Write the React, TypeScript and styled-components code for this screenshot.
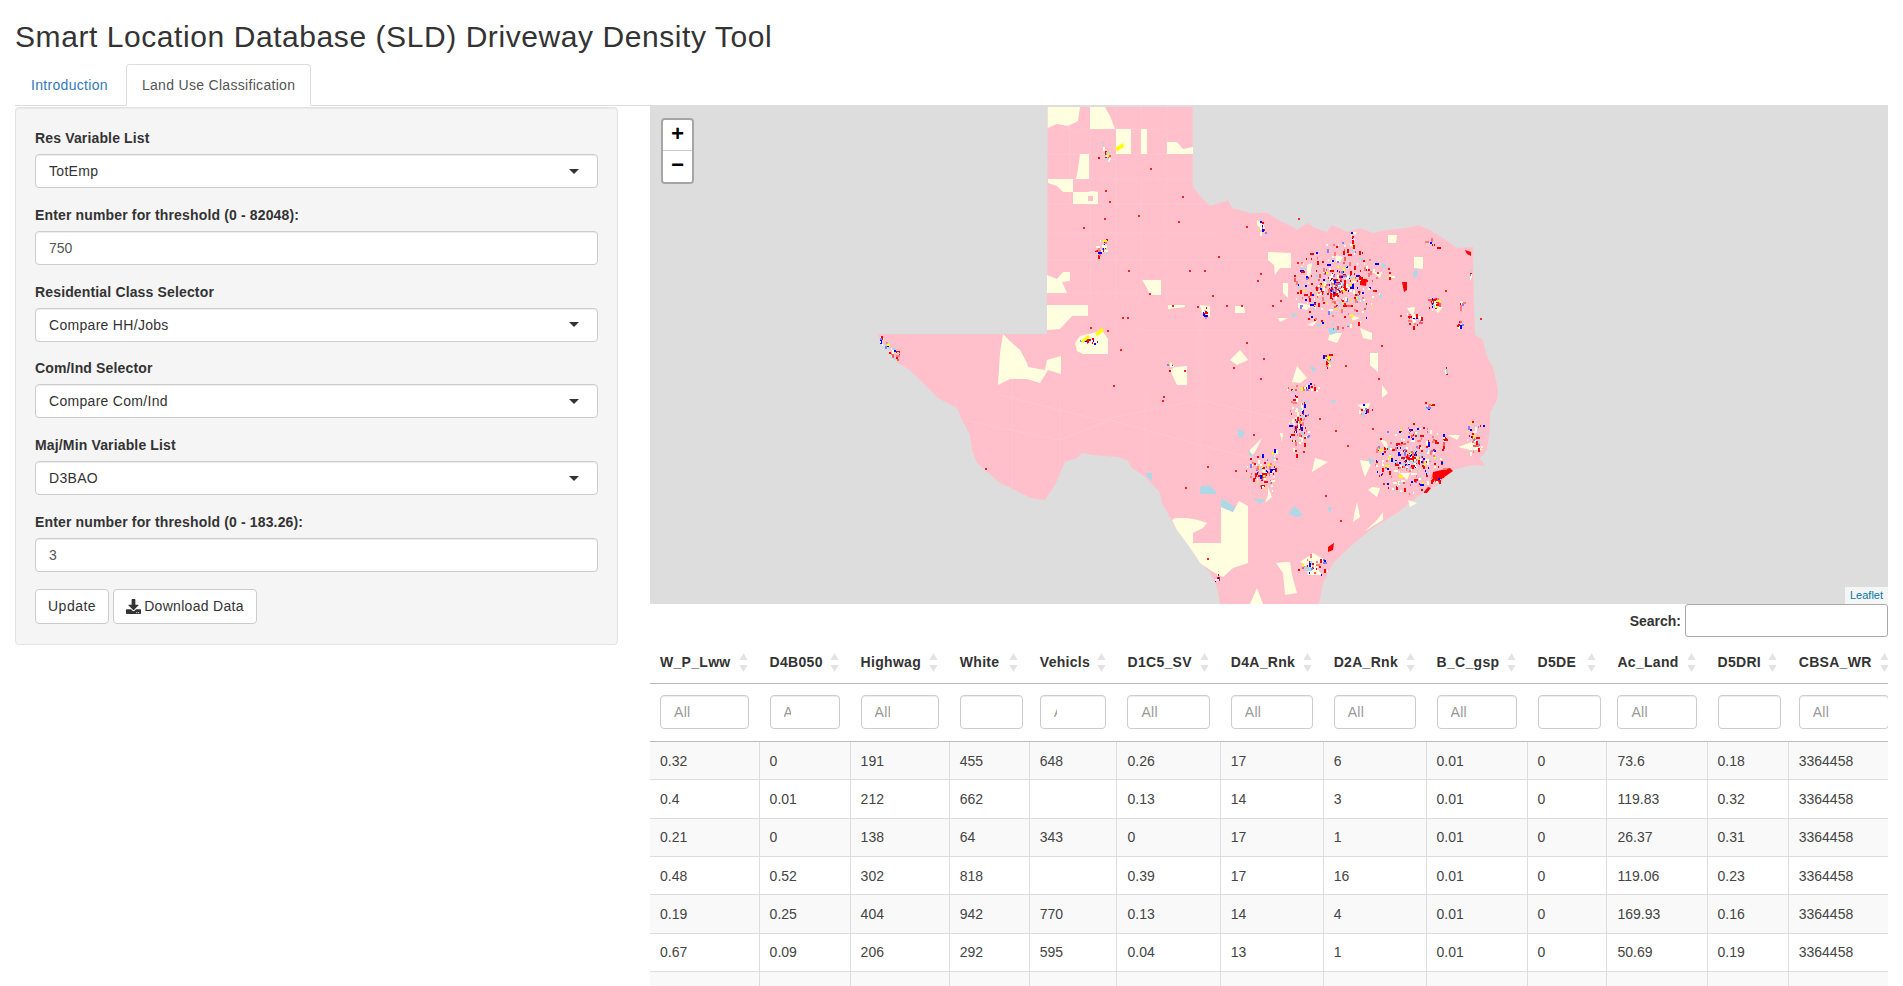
import styled, { createGlobalStyle } from "styled-components";
import { FaDownload } from "react-icons/fa";

const GlobalStyle = createGlobalStyle`
  html, body {
    margin: 0;
    height: 100%;
    overflow: hidden;
    background: #fff;
  }
  body {
    font-family: "Liberation Sans", Arial, sans-serif;
    font-size: 14px;
    line-height: 20px;
    color: #333;
  }
  * {
    box-sizing: border-box;
  }
`;

const Page = styled.div`
  padding: 0 15px;
`;

const Title = styled.h2`
  margin: 20px 0 11px;
  font-size: 30px;
  font-weight: 500;
  line-height: 33px;
  letter-spacing: 0.57px;
  color: #333;
`;

const Tabs = styled.ul`
  display: flex;
  list-style: none;
  height: 42px;
  margin: 0;
  padding: 0;
  border-bottom: 1px solid #ddd;
`;

const Tab = styled.li<{ $active?: boolean }>`
  height: 42px;
  margin-right: 2px;
  padding: 10px 15px;
  border: 1px solid ${(p) => (p.$active ? "#ddd" : "transparent")};
  border-bottom-color: ${(p) => (p.$active ? "#fff" : "transparent")};
  border-radius: 4px 4px 0 0;
  background: ${(p) => (p.$active ? "#fff" : "none")};
  color: ${(p) => (p.$active ? "#555" : "#337ab7")};
  letter-spacing: 0.31px;
`;

const Content = styled.div`
  display: flex;
  gap: 32px;
  align-items: flex-start;
`;

const Well = styled.div`
  flex: 0 0 603px;
  margin-top: 1px;
  padding: 20px 19px 20px;
  border: 1px solid #e3e3e3;
  border-radius: 4px;
  background: #f5f5f5;
  box-shadow: inset 0 1px 1px rgba(0, 0, 0, 0.05);
`;

const FormGroup = styled.div`
  margin-bottom: 16.8px;
`;

const Label = styled.label`
  display: block;
  margin-bottom: 6px;
  font-weight: 700;
  letter-spacing: 0.15px;
`;

const SelectBox = styled.div`
  display: flex;
  align-items: center;
  justify-content: space-between;
  height: 34px;
  padding: 0 18px 0 13px;
  border: 1px solid #ccc;
  border-radius: 4px;
  background: #fff;
  box-shadow: inset 0 1px 1px rgba(0, 0, 0, 0.075);
  color: #333;
  letter-spacing: 0.3px;

  &::after {
    content: "";
    width: 0;
    height: 0;
    border-style: solid;
    border-width: 5px 5px 0;
    border-color: #333 transparent transparent;
  }
`;

const TextInput = styled.input`
  display: block;
  width: 100%;
  height: 34px;
  padding: 6px 13px;
  border: 1px solid #ccc;
  border-radius: 4px;
  background: #fff;
  box-shadow: inset 0 1px 1px rgba(0, 0, 0, 0.075);
  color: #555;
  font: inherit;
`;

const ButtonRow = styled.div`
  display: flex;
  gap: 4px;
`;

const Button = styled.button<{ $wide?: boolean }>`
  display: flex;
  align-items: center;
  gap: 3px;
  height: 35px;
  padding: 6px 12px;
  border: 1px solid #ccc;
  border-radius: 4px;
  background: #fff;
  color: #333;
  font: inherit;
  letter-spacing: ${(p) => (p.$wide ? "0.5px" : "0.3px")};
`;

const Main = styled.div`
  flex: 1;
  min-width: 0;
`;

const MapBox = styled.div`
  position: relative;
  height: 498px;
  background: #ddd;
  overflow: hidden;
`;

const MapSvg = styled.svg`
  display: block;
  width: 100%;
  height: 100%;
`;

const ZoomBar = styled.div`
  position: absolute;
  top: 12px;
  left: 11px;
  width: 33px;
  border: 2px solid rgba(0, 0, 0, 0.25);
  border-radius: 4px;
  background-clip: padding-box;
`;

const ZoomButton = styled.div`
  display: flex;
  align-items: center;
  justify-content: center;
  height: 31px;
  background: #fff;
  color: #000;
  font: 700 22px "Liberation Mono", monospace;

  &:first-child {
    border-bottom: 1px solid #ccc;
    border-radius: 2px 2px 0 0;
  }
  &:last-child {
    border-radius: 0 0 2px 2px;
  }
`;

const Attribution = styled.div`
  position: absolute;
  right: 0;
  bottom: 0;
  padding: 0 5px;
  background: rgba(255, 255, 255, 0.7);
  color: #0078a8;
  font-size: 11px;
  line-height: 17px;
`;

const SearchRow = styled.div`
  display: flex;
  justify-content: flex-end;
  align-items: center;
  gap: 4px;
  height: 33px;
  font-weight: 700;
`;

const SearchInput = styled.input`
  width: 203px;
  height: 33px;
  border: 1px solid #aaa;
  border-radius: 3px;
  background: #fff;
`;

const TableWrap = styled.div`
  overflow: hidden;
`;

const Table = styled.table`
  width: 1248.9px;
  table-layout: fixed;
  border-collapse: separate;
  border-spacing: 0;
`;

const HeadCell = styled.th`
  height: 47px;
  padding: 4px 10.5px 0 11px;
  border-bottom: 1px solid #bbb;
  font-weight: 700;
  text-align: left;
  white-space: nowrap;
  letter-spacing: 0.3px;

  &:first-child {
    padding-left: 10px;
  }
`;

const HeadInner = styled.div`
  display: flex;
  align-items: center;
  justify-content: space-between;
`;

const FilterCell = styled.td`
  height: 58px;
  padding: 0 10px 1px 11px;
  border-bottom: 1px solid #bbb;

  &:first-child {
    padding-left: 10px;
  }
`;

const FilterInput = styled.input`
  display: block;
  width: 100%;
  height: 34px;
  padding: 0 48px 0 13px;
  border: 1px solid #ccc;
  border-radius: 4px;
  background: #fff;
  box-shadow: inset 0 1px 1px rgba(0, 0, 0, 0.075);
  font: inherit;
  letter-spacing: 0.3px;

  &::placeholder {
    color: #999;
    opacity: 1;
  }
`;

const Row = styled.tr<{ $odd: boolean }>`
  background: ${(p) => (p.$odd ? "#f9f9f9" : "#fff")};
`;

const Cell = styled.td`
  height: 38.33px;
  padding: 0 10px;
  border-left: 1px solid #ddd;
  border-bottom: 1px solid #ddd;
  color: #444;
  white-space: nowrap;

  &:first-child {
    border-left: 0;
  }
`;

const columns: [string, number][] = [
  ["W_P_Lww", 108.6],
  ["D4B050", 91],
  ["Highwag", 99.2],
  ["White", 80],
  ["Vehicls", 87.7],
  ["D1C5_SV", 103.3],
  ["D4A_Rnk", 102.9],
  ["D2A_Rnk", 102.9],
  ["B_C_gsp", 101],
  ["D5DE", 79.9],
  ["Ac_Land", 100.1],
  ["D5DRI", 81.2],
  ["CBSA_WR", 111.5],
];

const rows = [
  ["0.32", "0", "191", "455", "648", "0.26", "17", "6", "0.01", "0", "73.6", "0.18", "3364458"],
  ["0.4", "0.01", "212", "662", "", "0.13", "14", "3", "0.01", "0", "119.83", "0.32", "3364458"],
  ["0.21", "0", "138", "64", "343", "0", "17", "1", "0.01", "0", "26.37", "0.31", "3364458"],
  ["0.48", "0.52", "302", "818", "", "0.39", "17", "16", "0.01", "0", "119.06", "0.23", "3364458"],
  ["0.19", "0.25", "404", "942", "770", "0.13", "14", "4", "0.01", "0", "169.93", "0.16", "3364458"],
  ["0.67", "0.09", "206", "292", "595", "0.04", "13", "1", "0.01", "0", "50.69", "0.19", "3364458"],
  ["0", "0.05", "167", "19", "890", "0", "10", "1", "0.01", "0", "229.04", "0.01", "3364458"],
];

// map shapes are in page pixels, the svg viewBox below matches the map box
const texas =
  "1047.7,107 1192.7,107 1192.7,187 1195,189.5 1203,199 1210,206 1228,200 1232,208 1250,213 1267,213 1282,222 1290,225 1297,230 1307,223 1315,228 1327,232 1332,225 1347,232 1360,228 1373,233 1387,230 1407,228 1418,225 1430,230 1443,238 1457,248 1473,247 1474,307 1475,335 1483,340 1487,357 1493,367 1498,390 1497,400 1490,413 1490,430 1487,450 1480,458 1485,466 1473,465 1453,470 1438,485 1417,497 1397,513 1370,530 1350,547 1333,563 1323,583 1320,600 1318,604 1220,604 1217,587 1210,573 1197,558 1188,545 1177,530 1170,517 1162,503 1160,493 1153,485 1145,477 1132,468 1127,460 1117,457 1093,455 1082,453 1077,458 1065,462 1060,473 1055,485 1045,500 1030,498 1015,490 1000,483 985,470 977,463 972,450 970,435 962,420 957,408 938,398 930,390 917,377 908,369 898,363 893,355 888,348 880,340 878,334 1047,334";

const yellowShapes = [
  "1047.7,107 1080,107 1078,121 1068,126 1057,124 1047.7,128",
  "1090,107 1105,107 1110,116 1115,129 1090,129",
  "1116,129 1131,129 1131,154 1116,154",
  "1141,129 1147,129 1147,154 1141,154",
  "1167,142 1177,142 1183,149 1193,147 1193,154 1167,154",
  "1080,154 1089,154 1089,179 1076,179 1078,169",
  "1048,179 1073,179 1073,192 1063,192 1057,186 1048,183",
  "1073,192 1087,192 1093,191 1098,192 1098,204 1073,204",
  "1047,275 1057,279 1063,272 1070,272 1070,281 1062,282 1067,293 1047,293",
  "1047,305 1088,305 1088,316 1072,316 1060,329 1047,330",
  "1142,280 1161,280 1161,295 1150,295 1147,288",
  "1080,336 1093,333 1102,330 1108,339 1108,354 1083,354 1077,351 1075,343",
  "1003,334 1012,343 1020,350 1027,363 1028,367 1045,370 1047,360 1061,356 1061,374 1048,370 1040,383 1027,379 1010,379 998,385 1000,353",
  "1175,367 1187,366 1187,385 1177,385 1170,370",
  "1168,305 1185,305 1185,307 1168,309",
  "1200,305 1210,306 1210,317 1202,313",
  "1221,507 1233,512 1239,501 1248,506 1248,563 1233,568 1223,577 1213,572 1200,563 1197,558 1188,545 1177,530 1172,520 1175,518 1187,518 1198,520 1207,523 1203,528 1193,533 1193,543 1221,543",
  "1285,562 1290,562 1292,575 1297,593 1285,595 1283,573 1276,563",
  "1257,588 1263,604 1250,604",
  "1300,562 1313,553 1325,560 1315,565 1322,575 1308,575 1307,565",
  "1357,502 1360,517 1353,522 1355,510",
  "1383,512 1383,520 1365,531 1377,520",
  "1315,458 1328,462 1320,467 1312,472",
  "1360,460 1372,462 1365,477 1362,468",
  "1372,487 1380,488 1377,497 1368,490",
  "1268,487 1272,497 1265,503 1268,495",
  "1357,405 1370,403 1367,412",
  "1448,435 1460,435 1457,440",
  "1458,447 1472,442 1483,450 1470,450",
  "1383,440 1387,442 1388,450 1382,443",
  "1400,473 1410,473 1407,480",
  "1408,500 1417,503 1410,507",
  "1280,433 1283,433 1282,442",
  "1268,252 1291,253 1291,268 1280,268 1275,275 1274,265 1268,260",
  "1235,306 1244,306 1245,313 1235,313",
  "1388,235 1397,235 1396,243 1388,243",
  "1414,257 1423,257 1423,269 1414,268",
  "1335,255 1343,257 1340,262 1336,262",
  "1283,283 1288,283 1288,298 1283,293",
  "1298,303 1310,305 1307,310 1298,308",
  "1307,265 1312,263 1310,277 1307,275",
  "1230,360 1240,350 1248,360 1237,365",
  "1292,382 1297,366 1307,378 1300,383",
  "1330,333 1342,333 1337,343 1328,340",
  "1360,328 1372,333 1372,340 1363,338",
  "1370,353 1378,353 1378,372 1370,365",
  "1407,308 1415,307 1413,317",
  "1433,307 1443,307 1438,313",
  "1307,325 1318,320 1313,326",
  "1278,318 1288,318 1280,322",
  "1382,385 1388,393 1382,398",
  "1352,232 1357,232 1355,235",
  "1257,220 1263,223 1262,230 1257,225",
  "1373,272 1382,272 1380,278",
  "1350,315 1360,318 1353,321",
  "1250,450 1262,438 1255,452 1250,458",
];

const blueShapes = [
  "1221,498 1235,507 1233,512 1221,507",
  "1328,328 1337,328 1337,333 1330,335",
  "1292,313 1298,315 1292,318",
  "1413,272 1418,268 1417,277 1413,277",
  "1382,262 1387,267 1382,268",
  "1310,365 1317,370 1313,372",
  "1315,275 1320,275 1317,279",
  "1352,243 1355,245 1354,250",
  "1295,506 1303,515 1297,517 1288,514",
  "1200,487 1210,485 1217,494 1200,494",
  "1238,429 1245,432 1243,437 1238,437",
  "1368,458 1375,460 1370,465",
  "1327,507 1332,507 1330,513",
  "1253,498 1265,500 1260,504",
  "1305,566 1313,567 1312,571 1305,571",
  "1330,400 1337,400 1333,403",
  "1248,450 1253,455 1250,457",
  "1145,473 1152,473 1152,480 1148,478",
];

const redShapes = [
  "1433,472 1450,468 1453,471 1443,478 1437,483 1432,478",
  "1423,493 1428,487 1431,488 1427,493",
  "1328,547 1334,543 1333,550 1328,552",
  "1402,282 1407,282 1407,290 1404,292",
  "1430,300 1437,298 1440,305 1432,305",
  "1360,279 1367,279 1366,286 1360,285",
  "1465,250 1471,252 1471,256 1467,254",
  "1095,251 1100,249 1100,252 1095,252",
];

const countyLines =
  "M1047 129H1193M1047 154H1193M1047 179H1193M1047 204H1210M1047 233H1215M1047 260H1300M1047 293H1260M1140 330H1340M1070 107V204M1090 107V300M1116 107V300M1141 107V300M1167 107V300M1000 395L1100 420L1200 400L1330 430M962 420L1060 440L1110 420L1200 445L1300 470M1012 334V490M1060 400V480M1145 390V470M1200 300V500M1250 340V500";

// [x, y, radius x, radius y, count]
const clusters: [number, number, number, number, number][] = [
  [1337, 285, 44, 44, 430],
  [1410, 458, 38, 36, 380],
  [1263, 473, 20, 20, 110],
  [1298, 425, 11, 32, 110],
  [1105, 153, 8, 11, 26],
  [1102, 248, 7, 11, 34],
  [1087, 339, 11, 6, 20],
  [880, 338, 2, 5, 9],
  [885, 345, 4, 4, 12],
  [892, 350, 4, 4, 14],
  [896, 355, 4, 4, 9],
  [1312, 565, 17, 11, 46],
  [1262, 226, 5, 9, 16],
  [1413, 317, 9, 9, 26],
  [1435, 303, 11, 11, 28],
  [1459, 325, 4, 4, 10],
  [1460, 304, 2, 6, 10],
  [1327, 360, 5, 11, 20],
  [1303, 387, 20, 5, 28],
  [1204, 311, 4, 7, 15],
  [1171, 365, 4, 6, 10],
  [1473, 437, 14, 18, 44],
  [1365, 408, 9, 6, 14],
  [1427, 405, 9, 6, 14],
  [1217, 577, 4, 7, 10],
  [1446, 372, 2, 8, 7],
  [1390, 275, 4, 4, 6],
  [1352, 240, 2, 8, 12],
  [1443, 438, 4, 4, 7],
  [1470, 272, 2, 6, 6],
  [1275, 455, 4, 8, 8],
  [1432, 243, 11, 6, 7],
];

const singles = [
  [1150, 168], [1182, 196], [1178, 221], [1105, 190], [1109, 201], [1138, 215], [1104, 218], [1083, 227],
  [1189, 270], [1204, 270], [1128, 270], [1120, 349], [1149, 293], [1212, 295], [1197, 306], [1172, 305],
  [1107, 330], [1122, 317], [1090, 327], [1127, 317], [1246, 226], [1298, 218], [1344, 303], [1297, 262],
  [1257, 280], [1280, 300], [1260, 273], [1272, 305], [1226, 305], [1218, 256], [1184, 370], [1113, 385],
  [1163, 396], [1162, 400], [1246, 342], [1263, 358], [1260, 378], [1241, 305], [1233, 367], [1373, 290],
  [1356, 310], [1377, 272], [1400, 315], [1445, 290], [1388, 268], [1381, 345], [1319, 418], [1372, 428],
  [1253, 434], [1207, 466], [1235, 470], [1185, 487], [1303, 451], [1347, 445], [1300, 435], [1335, 430],
  [1383, 483], [1325, 495], [1207, 558], [1340, 520], [1378, 378], [1480, 318], [1345, 365], [985, 468],
];

const palette = [
  "#f00", "#f00", "#f00", "#f00", "#f00", "#ff5a5a", "#ff7a7a", "#ff7a7a", "#00f", "#00f",
  "#ff0", "#add8e6", "#add8e6", "#ffffe0", "#ffffe0", "#ffffe0", "#ffffe0", "#8080ff",
];

function seeded(seed: number) {
  let s = seed;
  return () => {
    s = (s + 0x6d2b79f5) | 0;
    let t = Math.imul(s ^ (s >>> 15), 1 | s);
    t = (t + Math.imul(t ^ (t >>> 7), 61 | t)) ^ t;
    return ((t ^ (t >>> 14)) >>> 0) / 4294967296;
  };
}

const rand = seeded(77);

const speckles = clusters.flatMap(([cx, cy, rx, ry, n]) =>
  Array.from({ length: n }, () => {
    const shape = rand();
    const angle = rand() * Math.PI * 2;
    // more marks near the middle, thinning out towards the edge
    const dist = Math.pow(rand(), 1.5);
    return {
      x: Math.round(cx + Math.cos(angle) * dist * rx),
      y: Math.round(cy + Math.sin(angle) * dist * ry),
      w: shape < 0.3 ? 1 : shape > 0.9 ? 4 : 2,
      h: shape > 0.7 && shape <= 0.9 ? 4 : 2,
      fill: palette[Math.floor(rand() * palette.length)],
    };
  })
);

function TexasMap() {
  return (
    <MapSvg viewBox="650 106 1238 498" preserveAspectRatio="none">
      <polygon points={texas} fill="#ffc0cb" />
      <path d={countyLines} fill="none" stroke="#ffcbd4" strokeWidth="0.6" />
      {yellowShapes.map((p) => (
        <polygon key={p} points={p} fill="#ffffe0" />
      ))}
      <rect x="1088" y="196" width="5" height="5" fill="#ffc0cb" />
      {blueShapes.map((p) => (
        <polygon key={p} points={p} fill="#add8e6" />
      ))}
      {redShapes.map((p) => (
        <polygon key={p} points={p} fill="#f00" />
      ))}
      {singles.map(([x, y]) => (
        <rect key={`${x}-${y}`} x={x} y={y} width="2" height="2" fill="#f22" />
      ))}
      {speckles.map((s, i) => (
        <rect key={i} x={s.x} y={s.y} width={s.w} height={s.h} fill={s.fill} />
      ))}
      <path d="M1081 341L1088 335L1090 337L1083 343ZM1095 333L1102 328L1104 331L1097 336Z" fill="#ff0" />
      <path d="M1115 148L1123 143L1124 147L1117 151Z" fill="#ff0" />
    </MapSvg>
  );
}

function SortIcon() {
  return (
    <svg width="9" height="19" viewBox="0 0 9 19">
      <path d="M4.5 0L8.5 7H0.5Z" fill="#e3e3e3" />
      <path d="M4.5 19L8.5 12H0.5Z" fill="#e3e3e3" />
    </svg>
  );
}

function App() {
  return (
    <>
      <GlobalStyle />
      <Page>
        <Title>Smart Location Database (SLD) Driveway Density Tool</Title>
        <Tabs>
          <Tab>Introduction</Tab>
          <Tab $active>Land Use Classification</Tab>
        </Tabs>
        <Content>
          <Well>
            <FormGroup>
              <Label>Res Variable List</Label>
              <SelectBox>TotEmp</SelectBox>
            </FormGroup>
            <FormGroup>
              <Label>Enter number for threshold (0 - 82048):</Label>
              <TextInput defaultValue="750" />
            </FormGroup>
            <FormGroup>
              <Label>Residential Class Selector</Label>
              <SelectBox>Compare HH/Jobs</SelectBox>
            </FormGroup>
            <FormGroup>
              <Label>Com/Ind Selector</Label>
              <SelectBox>Compare Com/Ind</SelectBox>
            </FormGroup>
            <FormGroup>
              <Label>Maj/Min Variable List</Label>
              <SelectBox>D3BAO</SelectBox>
            </FormGroup>
            <FormGroup>
              <Label>Enter number for threshold (0 - 183.26):</Label>
              <TextInput defaultValue="3" />
            </FormGroup>
            <ButtonRow>
              <Button $wide>Update</Button>
              <Button>
                <FaDownload size={15} />
                Download Data
              </Button>
            </ButtonRow>
          </Well>
          <Main>
            <MapBox>
              <TexasMap />
              <ZoomBar>
                <ZoomButton>+</ZoomButton>
                <ZoomButton>−</ZoomButton>
              </ZoomBar>
              <Attribution>Leaflet</Attribution>
            </MapBox>
            <SearchRow>
              Search:
              <SearchInput />
            </SearchRow>
            <TableWrap>
              <Table>
                <colgroup>
                  {columns.map(([name, width]) => (
                    <col key={name} style={{ width }} />
                  ))}
                </colgroup>
                <thead>
                  <tr>
                    {columns.map(([name]) => (
                      <HeadCell key={name}>
                        <HeadInner>
                          {name}
                          <SortIcon />
                        </HeadInner>
                      </HeadCell>
                    ))}
                  </tr>
                  <tr>
                    {columns.map(([name]) => (
                      <FilterCell key={name}>
                        <FilterInput placeholder="All" />
                      </FilterCell>
                    ))}
                  </tr>
                </thead>
                <tbody>
                  {rows.map((row, r) => (
                    <Row key={r} $odd={r % 2 === 0}>
                      {row.map((value, c) => (
                        <Cell key={c}>{value}</Cell>
                      ))}
                    </Row>
                  ))}
                </tbody>
              </Table>
            </TableWrap>
          </Main>
        </Content>
      </Page>
    </>
  );
}

export default App;
